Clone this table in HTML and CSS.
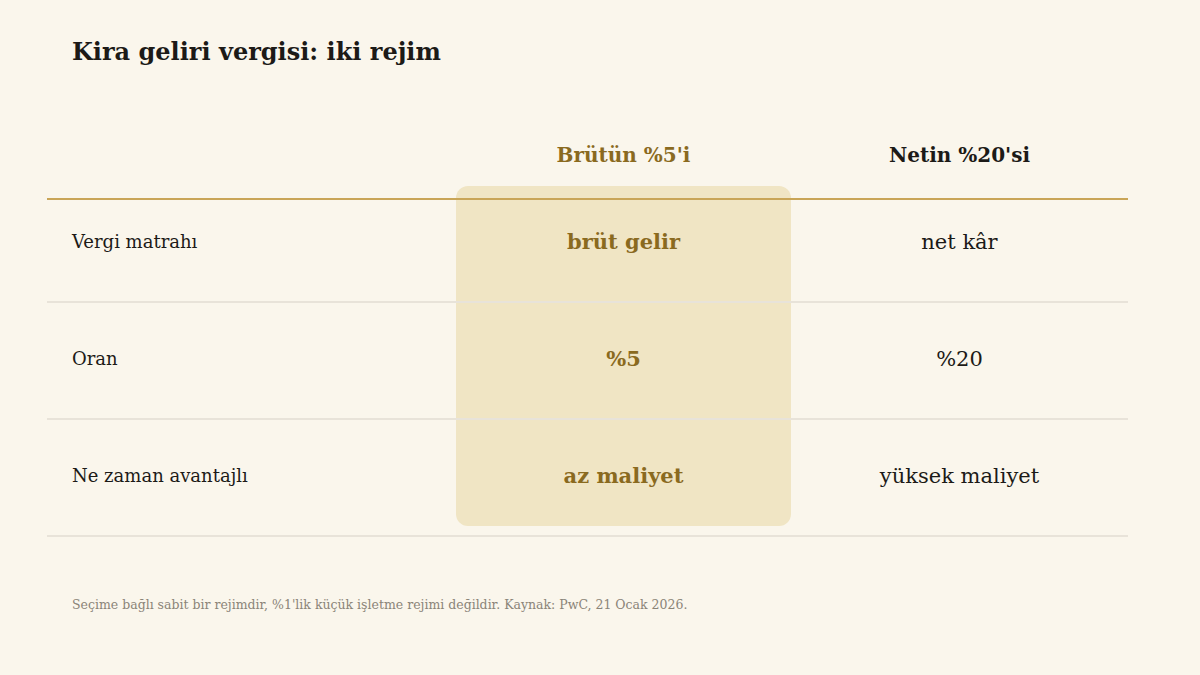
FILE: index.html
```html
<!DOCTYPE html>
<html lang="tr">
<head>
<meta charset="utf-8">
<title>Kira geliri vergisi</title>
<link rel="stylesheet" href="styles.css">
</head>
<body>
<div class="page">
  <h1 class="title">Kira geliri vergisi: iki rejim</h1>
  <div class="table">
    <div class="highlight"></div>
    <div class="row head">
      <div class="cell label"></div>
      <div class="cell col gold">Brütün %5'i</div>
      <div class="cell col dark">Netin %20'si</div>
    </div>
    <div class="row first">
      <div class="cell label">Vergi matrahı</div>
      <div class="cell col val gold">brüt gelir</div>
      <div class="cell col val">net kâr</div>
    </div>
    <div class="row">
      <div class="cell label">Oran</div>
      <div class="cell col val gold">%5</div>
      <div class="cell col val">%20</div>
    </div>
    <div class="row">
      <div class="cell label">Ne zaman avantajlı</div>
      <div class="cell col val gold">az maliyet</div>
      <div class="cell col val">yüksek maliyet</div>
    </div>
  </div>
  <p class="note">Seçime bağlı sabit bir rejimdir, %1'lik küçük işletme rejimi değildir. Kaynak: PwC, 21 Ocak 2026.</p>
</div>
</body>
</html>
```
FILE: styles.css
```css
html, body {
  margin: 0;
  padding: 0;
  background: #faf6ec;
}
body {
  font-family: "DejaVu Serif", serif;
  color: #1c1a17;
  width: 1200px;
  height: 675px;
  overflow: hidden;
}
.page {
  padding: 37px 72px 0 47px;
}
.title {
  margin: 0 0 0 25px;
  font-size: 24px;
  line-height: 30px;
  font-weight: bold;
  color: #1c1a17;
}
.table {
  position: relative;
  margin-top: 63px;
  width: 1081px;
}
.highlight {
  position: absolute;
  left: 409px;
  top: 56px;
  width: 335px;
  height: 340px;
  background: #f0e5c4;
  border-radius: 12px;
  z-index: 0;
}
.row {
  position: relative;
  z-index: 1;
  display: grid;
  grid-template-columns: 409px 335px 337px;
  border-bottom: 2px solid #e8e3d9;
  height: 117px;
  box-sizing: border-box;
  align-items: start;
}
.row .cell {
  padding-top: 41px;
  line-height: 30px;
}
.row.head {
  height: 70px;
  border-bottom: 2px solid #c9a557;
}
.row.head .cell {
  padding-top: 10px;
  font-size: 20px;
  font-weight: bold;
}
.row.first {
  height: 103px;
}
.row.first .cell {
  padding-top: 27px;
}
.label {
  padding-left: 25px;
  font-size: 18px;
}
.col {
  text-align: center;
}
.val {
  font-size: 21px;
}
.gold {
  color: #8a6a1f;
  font-weight: bold;
}
.dark {
  color: #1c1a17;
}
.note {
  margin: 60px 0 0 25px;
  font-size: 12.5px;
  line-height: 16px;
  color: #8a8478;
}
```
